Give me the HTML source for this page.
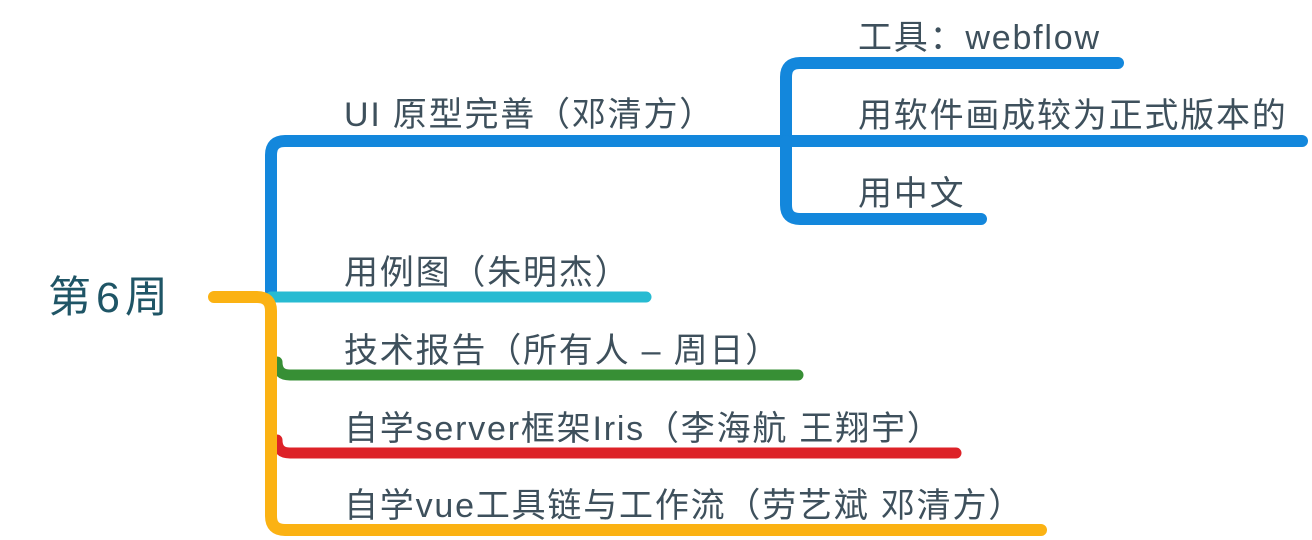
<!DOCTYPE html>
<html><head><meta charset="utf-8"><style>
body{margin:0;width:1312px;height:540px;background:#fff;position:relative;overflow:hidden}
.t{position:absolute;font-family:"Liberation Sans","Noto Sans CJK SC",sans-serif;font-size:34px;color:#3e505c;white-space:nowrap;line-height:40px;letter-spacing:1.8px}
svg{position:absolute;left:0;top:0}
</style></head><body>
<svg width="1312" height="540" fill="none" stroke-linecap="round">
<path d="M271 297 V155 Q271 141 285 141 H790" stroke="#1387dc" stroke-width="12"/>
<path d="M271 297 H646" stroke="#27bbd2" stroke-width="11"/>
<path d="M277 362 Q277 375 290 375 H798" stroke="#378f35" stroke-width="11"/>
<path d="M277 440 Q277 453 290 453 H956" stroke="#dd2228" stroke-width="11"/>
<path d="M214 297 H257 Q271 297 271 311 V516 Q271 530 285 530 H1041" stroke="#fbb213" stroke-width="12"/>
<path d="M786 141 V77 Q786 63 800 63 H1118" stroke="#1387dc" stroke-width="12"/>
<path d="M786 141 H1302" stroke="#1387dc" stroke-width="12"/>
<path d="M786 141 V205 Q786 219 800 219 H981" stroke="#1387dc" stroke-width="12"/>
</svg>
<div class="t" style="left:48px;top:274px;font-size:43px;color:#1f5566;line-height:48px;letter-spacing:5px">第6周</div>
<div class="t" style="left:344px;top:95px">UI 原型完善（邓清方）</div>
<div class="t" style="left:344px;top:253px">用例图（朱明杰）</div>
<div class="t" style="left:344px;top:331px">技术报告（所有人 – 周日）</div>
<div class="t" style="left:344px;top:409px">自学server框架Iris（李海航 王翔宇）</div>
<div class="t" style="left:344px;top:486px">自学vue工具链与工作流（劳艺斌 邓清方）</div>
<div class="t" style="left:858px;top:18px">工具：webflow</div>
<div class="t" style="left:858px;top:96px">用软件画成较为正式版本的</div>
<div class="t" style="left:858px;top:174px">用中文</div>
</body></html>
